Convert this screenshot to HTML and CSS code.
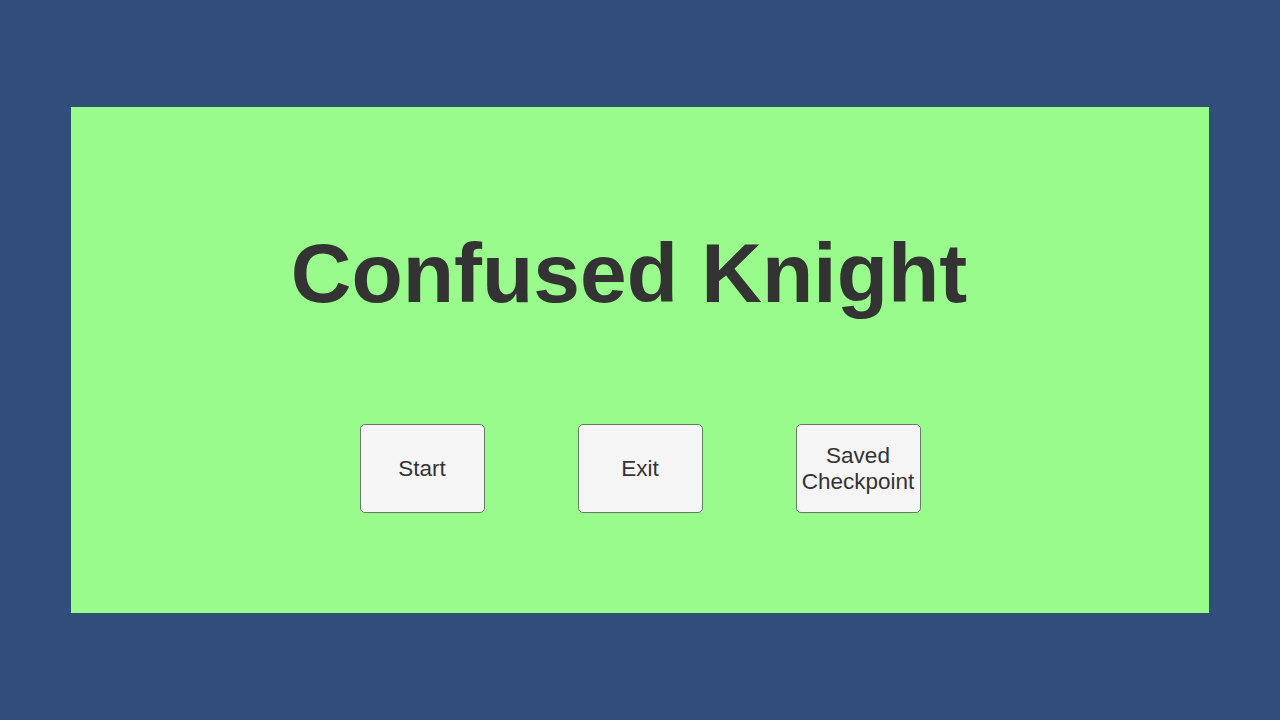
FILE: index.html
```html
<!DOCTYPE html>
<html lang="en">
<head>
  <meta charset="UTF-8">
  <title>Confused Knight</title>
  <meta name="viewport" content="width=device-width, initial-scale=1.0">
  <link rel="stylesheet" href="styles.css">
</head>
<body>

<div class="menu-panel">
  <h1 class="game-title">Confused Knight</h1>
  <div class="menu-buttons">
    <button class="menu-btn" id="startBtn">Start</button>
    <button class="menu-btn" id="exitBtn">Exit</button>
    <button class="menu-btn" id="checkpointBtn">Saved<br>Checkpoint</button>
  </div>
</div>

</body>
</html>
```

FILE: styles.css
```css
* {
  box-sizing: border-box;
}

html,
body {
  height: 100%;
}

body {
  margin: 0;
  font-family: "Liberation Sans", Arial, sans-serif;
  background-color: #314d7a;
  display: flex;
  align-items: center;
  justify-content: center;
  overflow: hidden;
}

.menu-panel {
  width: 1138px;
  height: 506px;
  background-color: #98fb8b;
  display: flex;
  flex-direction: column;
  align-items: center;
  padding-top: 124px;
}

.game-title {
  margin: 0;
  padding-right: 22px;
  font-size: 84px;
  line-height: 1;
  font-weight: bold;
  color: #333;
}

.menu-buttons {
  display: flex;
  gap: 93px;
  margin-top: 109px;
}

.menu-btn {
  width: 125px;
  height: 89px;
  padding: 0;
  font-family: inherit;
  font-size: 22.5px;
  line-height: 26px;
  color: #333;
  background-color: #f5f5f5;
  border: 1px solid #667a66;
  border-radius: 5px;
  cursor: pointer;
}

.menu-btn:hover {
  background-color: #fff;
}
```
